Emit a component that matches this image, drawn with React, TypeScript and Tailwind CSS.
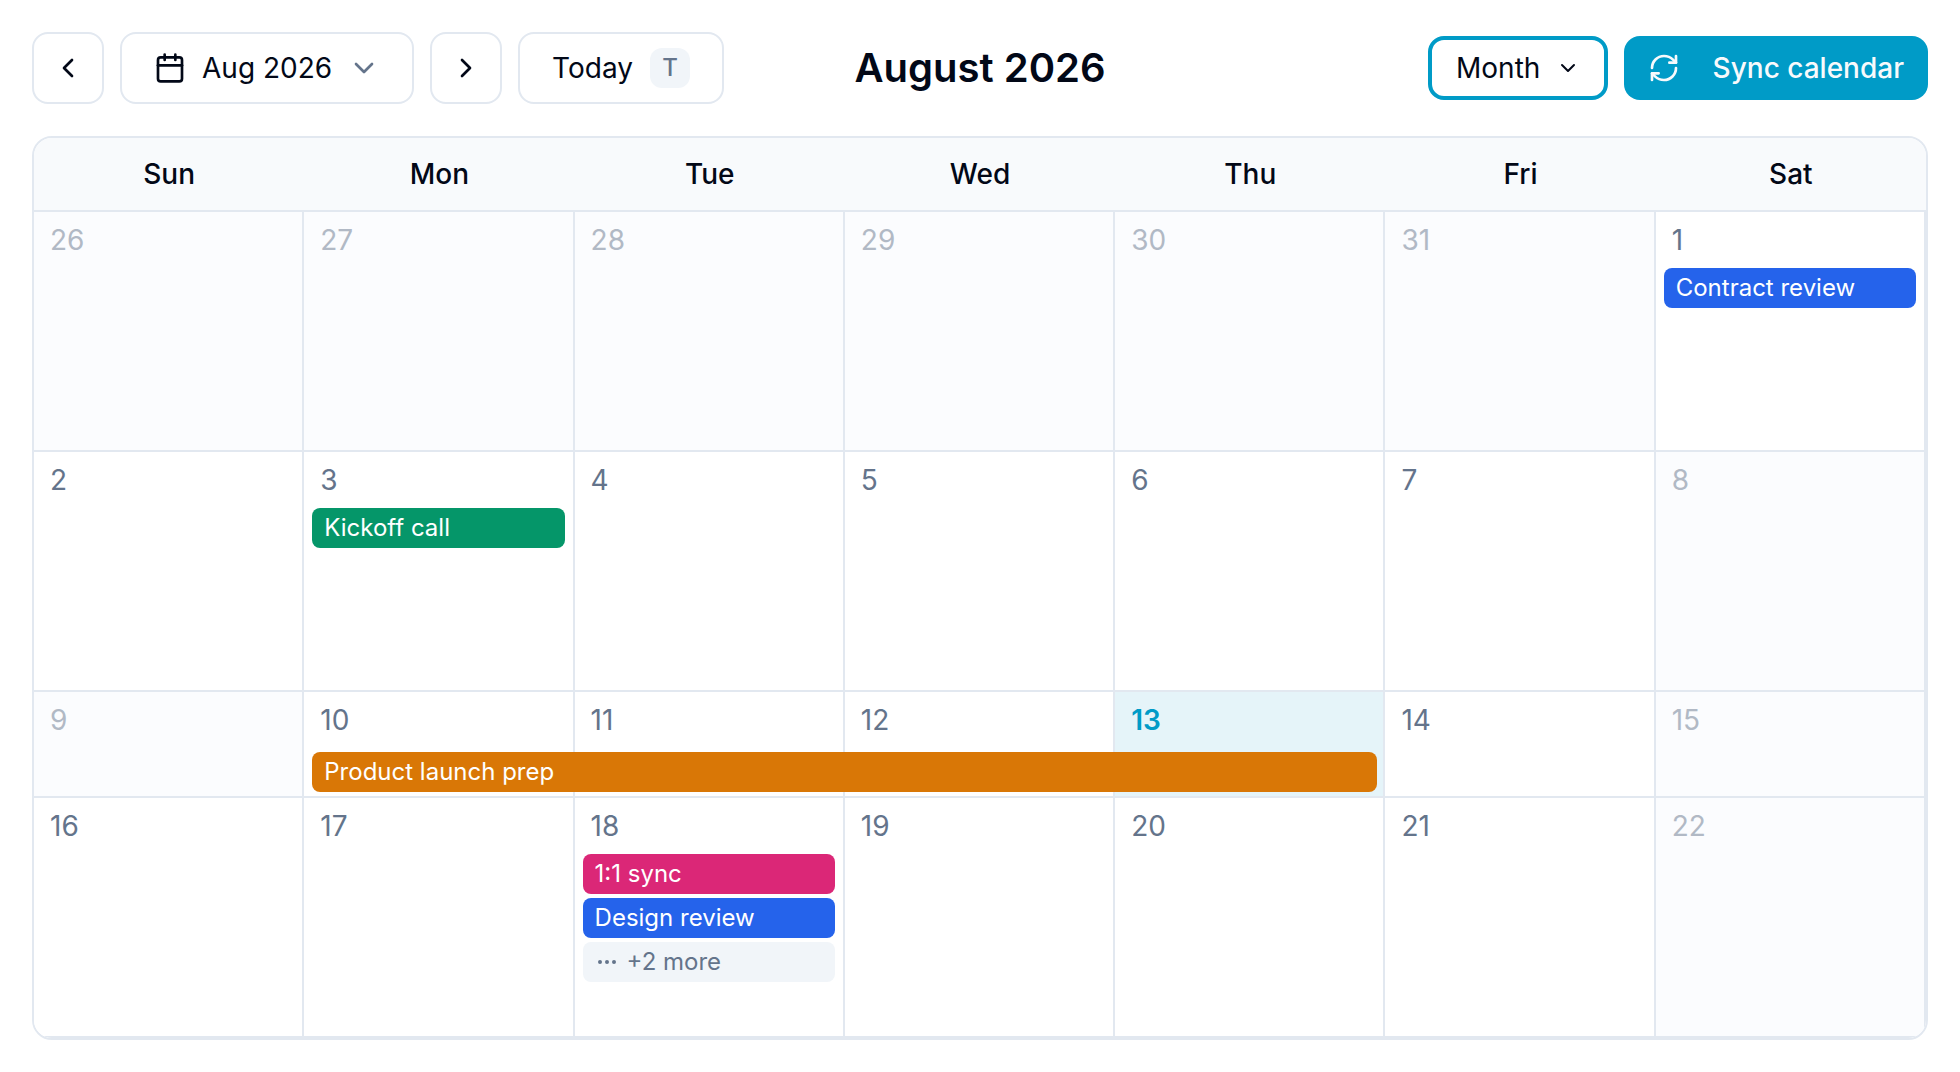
import { Calendar, ChevronDown, ChevronLeft, ChevronRight, Ellipsis, RefreshCw } from "lucide-react";

type CalendarEvent = { title: string; color: string; span?: boolean };
type Day = { date: number; muted?: boolean; today?: boolean; events?: CalendarEvent[]; more?: number };

const weekdays = ["Sun", "Mon", "Tue", "Wed", "Thu", "Fri", "Sat"];

const weeks: Day[][] = [
  [
    { date: 26, muted: true },
    { date: 27, muted: true },
    { date: 28, muted: true },
    { date: 29, muted: true },
    { date: 30, muted: true },
    { date: 31, muted: true },
    { date: 1, events: [{ title: "Contract review", color: "bg-[#2563eb]" }] },
  ],
  [
    { date: 2 },
    { date: 3, events: [{ title: "Kickoff call", color: "bg-[#059669]" }] },
    { date: 4 },
    { date: 5 },
    { date: 6 },
    { date: 7 },
    { date: 8, muted: true },
  ],
  [
    { date: 9, muted: true },
    { date: 10, events: [{ title: "Product launch prep", color: "bg-[#d97706]", span: true }] },
    { date: 11 },
    { date: 12 },
    { date: 13, today: true },
    { date: 14 },
    { date: 15, muted: true },
  ],
  [
    { date: 16 },
    { date: 17 },
    {
      date: 18,
      events: [
        { title: "1:1 sync", color: "bg-[#db2777]" },
        { title: "Design review", color: "bg-[#2563eb]" },
      ],
      more: 2,
    },
    { date: 19 },
    { date: 20 },
    { date: 21 },
    { date: 22, muted: true },
  ],
];

const outline = "flex h-18 items-center rounded-2xl border-2 border-[#e2e8f0] bg-white";
const chip = "flex h-10 items-center rounded-lg px-3 text-left text-[24px] leading-8 whitespace-nowrap";

function Toolbar() {
  return (
    <header className="grid grid-cols-[1fr_auto_1fr] items-center text-[28px] leading-10">
      <div className="flex items-center gap-4">
        <button type="button" aria-label="Previous month" className={`${outline} w-18 justify-center`}>
          <ChevronLeft className="size-8" />
        </button>
        <button type="button" className={`${outline} gap-4 px-8`}>
          <Calendar className="size-8" />
          Aug 2026
          <ChevronDown className="size-8 text-[#64748b]" />
        </button>
        <button type="button" aria-label="Next month" className={`${outline} w-18 justify-center`}>
          <ChevronRight className="size-8" />
        </button>
        <button type="button" className={`${outline} min-w-[206px] justify-between gap-4 px-8`}>
          Today
          <kbd className="flex size-10 items-center justify-center rounded-xl bg-[#f1f5f9] font-[Inter,sans-serif] text-[24px] leading-8 font-medium text-[#64748b]">
            T
          </kbd>
        </button>
      </div>
      <h1 className="text-[40px] leading-12 font-semibold">August 2026</h1>
      <div className="flex items-center justify-end gap-4">
        <div className="relative">
          <select
            aria-label="Calendar view"
            className="block h-16 w-45 appearance-none rounded-2xl border-4 border-[#009bc7] bg-white pr-14 pl-6 outline-none"
          >
            <option>Month</option>
            <option>Week</option>
            <option>Day</option>
          </select>
          <ChevronDown className="pointer-events-none absolute top-5 right-7 size-6" />
        </div>
        <button
          type="button"
          className="flex h-16 min-w-76 items-center justify-between gap-6 rounded-2xl bg-[#009bc7] px-6 font-medium text-[#f8fafc]"
        >
          <RefreshCw className="size-8" />
          Sync calendar
        </button>
      </div>
    </header>
  );
}

function DayCell({ day }: { day: Day }) {
  const background = day.today ? "bg-[#e5f4f9]" : day.muted ? "bg-[#fbfcfe]" : "bg-white";
  const number = day.today ? "font-semibold text-[#009bc7]" : day.muted ? "text-[#b1b9c5]" : "text-[#64748b]";
  return (
    <td className={`border-r-2 border-b-2 border-[#e2e8f0] px-2 pt-2 pb-1 align-top ${background}`}>
      <div className={`px-2 text-[28px] leading-10 ${number}`}>{day.date}</div>
      {day.events && (
        <div className="mt-2 flex flex-col gap-1">
          {day.events.map((event) => (
            <button
              key={event.title}
              type="button"
              className={`${chip} text-white ${event.color} ${event.span ? "relative z-10 mt-1 w-[calc(400%+56px)]" : "w-full"}`}
            >
              {event.title}
            </button>
          ))}
          {day.more && (
            <button type="button" className={`${chip} w-full gap-2 bg-[#f1f5f9] text-[#64748b]`}>
              <Ellipsis className="size-6" />+{day.more} more
            </button>
          )}
        </div>
      )}
    </td>
  );
}

export default function App() {
  return (
    <main className="flex min-h-screen flex-col gap-8 bg-white p-8 font-[Inter,sans-serif] text-[#020817]">
      <Toolbar />
      <div className="overflow-hidden rounded-[20px] border-2 border-[#e2e8f0]">
        <table className="w-full table-fixed border-separate border-spacing-0">
          <thead>
            <tr className="h-[74px]">
              {weekdays.map((name) => (
                <th
                  key={name}
                  scope="col"
                  className="border-b-2 border-[#e2e8f0] bg-[#f8fafc] p-0 text-center text-[28px] leading-10 font-medium"
                >
                  {name}
                </th>
              ))}
            </tr>
          </thead>
          <tbody>
            {weeks.map((week) => {
              const compact = week.some((day) => day.events?.some((event) => event.span));
              return (
                <tr key={week[0].date} className={compact ? "" : "h-60"}>
                  {week.map((day) => (
                    <DayCell key={day.date} day={day} />
                  ))}
                </tr>
              );
            })}
          </tbody>
        </table>
      </div>
    </main>
  );
}
